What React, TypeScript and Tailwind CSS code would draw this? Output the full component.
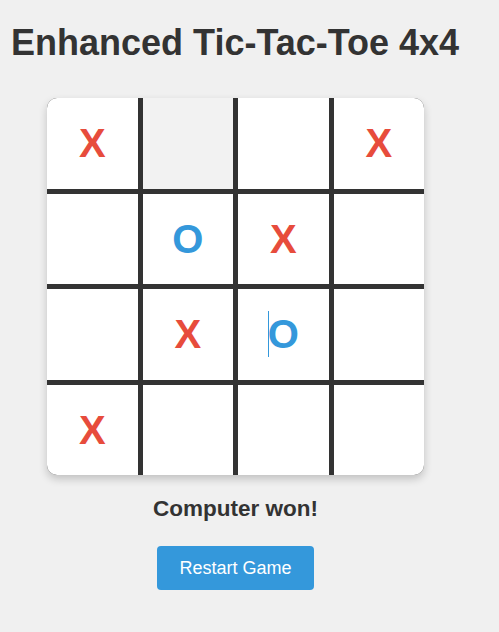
import React from "react";

type Mark = "X" | "O" | "";

const board: Mark[] = [
  "X", "", "", "X",
  "", "O", "X", "",
  "", "X", "O", "",
  "X", "", "", "",
];

function Cell({ mark, index }: { mark: Mark; index: number }) {
  const hovered = index === 1;
  const focused = index === 10;
  return (
    <div
      className={`flex items-center justify-center ${
        hovered ? "bg-[#f2f2f2]" : "bg-white"
      }`}
    >
      {mark && (
        <span
          className={`relative text-[40px] font-bold leading-[46px] ${
            mark === "X" ? "text-[#e74c3c]" : "text-[#3498db]"
          }`}
        >
          {focused && (
            <span className="absolute left-0 top-0 h-[46px] w-px bg-[#3498db]" />
          )}
          {mark}
        </span>
      )}
    </div>
  );
}

export default function App() {
  return (
    <div
      className="min-h-[632px] bg-[#f0f0f0] pl-[10px] pt-[23px] text-[#333]"
      style={{ fontFamily: '"Liberation Sans", Arial, sans-serif' }}
    >
      <div className="flex w-[451px] flex-col items-center">
        <h1 className="ml-[1px] self-start text-[36px] font-bold leading-[40px]">
          Enhanced Tic-Tac-Toe 4x4
        </h1>
        <div className="mt-[35px] grid h-[377px] w-[377px] grid-cols-4 grid-rows-4 gap-[5px] overflow-hidden rounded-[10px] bg-[#333] shadow-[0_4px_8px_rgba(0,0,0,0.2)]">
          {board.map((m, i) => (
            <Cell key={i} mark={m} index={i} />
          ))}
        </div>
        <div className="mt-[21px] text-[22.5px] font-bold leading-[25px]">
          Computer won!
        </div>
        <button
          type="button"
          className="mt-[25px] h-[44px] rounded-[4px] bg-[#3498db] px-[22px] text-[18px] text-white"
        >
          Restart Game
        </button>
      </div>
    </div>
  );
}
